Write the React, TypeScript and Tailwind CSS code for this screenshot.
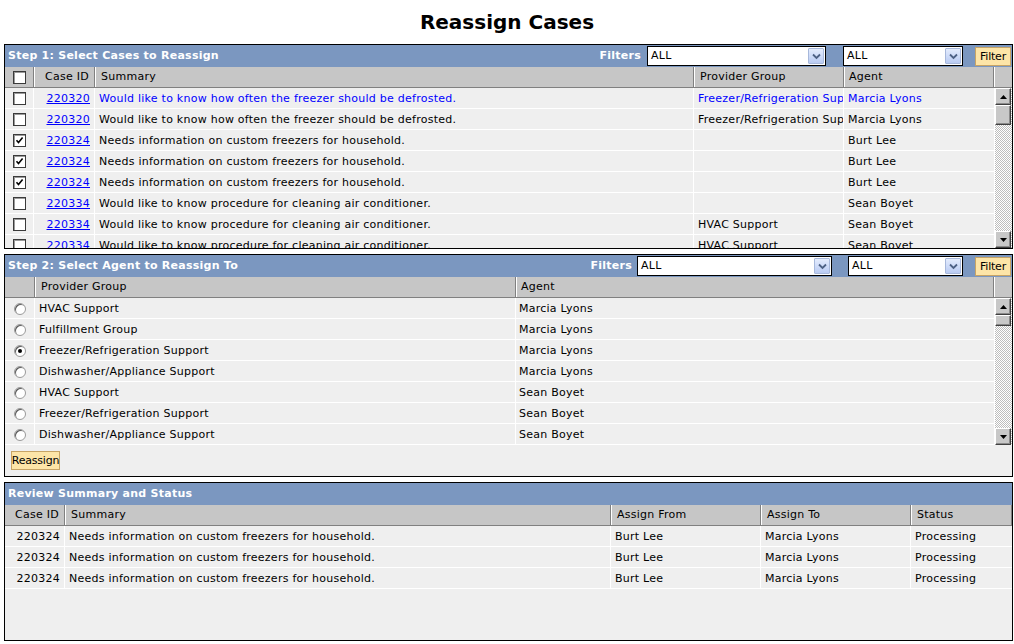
import React from "react";

type CaseRow = {
  id: string;
  summary: string;
  group: string;
  agent: string;
  checked?: boolean;
  active?: boolean;
};

const cases: CaseRow[] = [
  { id: "220320", summary: "Would like to know how often the freezer should be defrosted.", group: "Freezer/Refrigeration Support", agent: "Marcia Lyons", active: true },
  { id: "220320", summary: "Would like to know how often the freezer should be defrosted.", group: "Freezer/Refrigeration Support", agent: "Marcia Lyons" },
  { id: "220324", summary: "Needs information on custom freezers for household.", group: "", agent: "Burt Lee", checked: true },
  { id: "220324", summary: "Needs information on custom freezers for household.", group: "", agent: "Burt Lee", checked: true },
  { id: "220324", summary: "Needs information on custom freezers for household.", group: "", agent: "Burt Lee", checked: true },
  { id: "220334", summary: "Would like to know procedure for cleaning air conditioner.", group: "", agent: "Sean Boyet" },
  { id: "220334", summary: "Would like to know procedure for cleaning air conditioner.", group: "HVAC Support", agent: "Sean Boyet" },
  { id: "220334", summary: "Would like to know procedure for cleaning air conditioner.", group: "HVAC Support", agent: "Sean Boyet" },
];

const agents = [
  { group: "HVAC Support", agent: "Marcia Lyons" },
  { group: "Fulfillment Group", agent: "Marcia Lyons" },
  { group: "Freezer/Refrigeration Support", agent: "Marcia Lyons", selected: true },
  { group: "Dishwasher/Appliance Support", agent: "Marcia Lyons" },
  { group: "HVAC Support", agent: "Sean Boyet" },
  { group: "Freezer/Refrigeration Support", agent: "Sean Boyet" },
  { group: "Dishwasher/Appliance Support", agent: "Sean Boyet" },
];

const review = [
  { id: "220324", summary: "Needs information on custom freezers for household.", from: "Burt Lee", to: "Marcia Lyons", status: "Processing" },
  { id: "220324", summary: "Needs information on custom freezers for household.", from: "Burt Lee", to: "Marcia Lyons", status: "Processing" },
  { id: "220324", summary: "Needs information on custom freezers for household.", from: "Burt Lee", to: "Marcia Lyons", status: "Processing" },
];

function Checkbox({ checked }: { checked?: boolean }) {
  return (
    <span className="flex items-center justify-center w-[13px] h-[13px] bg-white border border-[#3a3a3a] shadow-[inset_1px_1px_0_#9a9a9a]">
      {checked && (
        <svg width="9" height="9" viewBox="0 0 9 9">
          <path d="M1.5 4.2 L3.5 6.5 L7.6 1.5" fill="none" stroke="#000" strokeWidth="1.6" />
        </svg>
      )}
    </span>
  );
}

function Radio({ checked }: { checked?: boolean }) {
  return (
    <span className="flex items-center justify-center w-[12px] h-[12px] rounded-full bg-white border border-[#9a9a9a] shadow-[inset_1px_1px_0_#5a5a5a]">
      {checked && <span className="w-[4px] h-[4px] rounded-full bg-black" />}
    </span>
  );
}

function SelectBox({ className }: { className: string }) {
  return (
    <div className={`flex items-center h-[20px] bg-white border border-black ${className}`}>
      <span className="flex-1 pl-[3px] pt-[1px] text-[11px] text-black">ALL</span>
      <span className="flex items-center justify-center w-[16px] h-[16px] mr-[1px] border border-[#a7b8db] rounded-[1px] bg-gradient-to-b from-[#e4ecfd] to-[#b9cbf3]">
        <svg width="9" height="7" viewBox="0 0 9 7">
          <path d="M1 1.5 L4.5 5 L8 1.5" fill="none" stroke="#4d6185" strokeWidth="1.8" />
        </svg>
      </span>
    </div>
  );
}

function YellowButton({ label, className }: { label: string; className: string }) {
  return (
    <span className={`flex items-center justify-center h-[19px] bg-[#fde5a8] border border-[#c7a466] text-[11px] tracking-[-0.2px] text-black leading-none ${className}`}>
      {label}
    </span>
  );
}

function ScrollBtn({ down }: { down?: boolean }) {
  return (
    <div className="flex items-center justify-center w-[16px] h-[17px] bg-[#c8c8c8] border-t border-l border-white border-b border-r border-b-[#404040] border-r-[#404040] shadow-[inset_-1px_-1px_0_#8a8a8a]">
      <svg width="7" height="4" viewBox="0 0 7 4">
        {down ? <path d="M0 0 H7 L3.5 4 Z" fill="#000" /> : <path d="M0 4 H7 L3.5 0 Z" fill="#000" />}
      </svg>
    </div>
  );
}

function Scrollbar({ height, thumb }: { height: string; thumb: string }) {
  return (
    <div className={`flex flex-col justify-between w-[18px] ${height} border-l border-white pr-[1px] bg-[repeating-conic-gradient(#bdbdbd_0%_25%,#ffffff_0%_50%)] bg-[length:2px_2px]`}>
      <div className="flex flex-col">
        <ScrollBtn />
        <div className={`w-[16px] ${thumb} bg-[#c8c8c8] border-t border-l border-white border-b border-r border-b-[#404040] border-r-[#404040] shadow-[inset_-1px_-1px_0_#8a8a8a]`} />
      </div>
      <ScrollBtn down />
    </div>
  );
}

function PanelHeader({ title, children }: { title: string; children?: React.ReactNode }) {
  return (
    <div className="flex items-center h-[22px] bg-[#7b97c0] pl-[3px]">
      <span className="text-[11px] font-bold text-white tracking-[0.25px]">{title}</span>
      {children}
    </div>
  );
}

function HeadCell({ className, children }: { className: string; children?: React.ReactNode }) {
  return (
    <div className={`flex items-center h-full border-l border-white border-r border-r-[#808080] overflow-hidden whitespace-nowrap ${className}`}>
      {children}
    </div>
  );
}

export default function App() {
  return (
    <div className="w-[1014px] h-[644px] bg-white font-['DejaVu_Sans',Verdana,sans-serif] text-[11px] tracking-[0.25px] text-black">
      <div className="flex items-center justify-center h-[44px]">
        <h1 className="text-[20px] font-bold leading-none tracking-normal">Reassign Cases</h1>
      </div>

      {/* Step 1 */}
      <div className="ml-[4px] w-[1009px] border border-black">
        <PanelHeader title="Step 1: Select Cases to Reassign">
          <span className="ml-auto mr-[6px] text-[11px] font-bold text-white">Filters</span>
          <SelectBox className="w-[179px]" />
          <SelectBox className="w-[120px] ml-[17px]" />
          <span className="ml-[12px] mr-[1px]">
            <YellowButton label="Filter" className="w-[36px]" />
          </span>
        </PanelHeader>
        <div className="flex h-[21px] bg-[#c6c6c6] border-b border-[#808080]">
          <HeadCell className="w-[29px] justify-center border-l-0">
            <Checkbox />
          </HeadCell>
          <HeadCell className="w-[61px] justify-end pr-[5px]">Case ID</HeadCell>
          <HeadCell className="w-[599px] pl-[5px]">Summary</HeadCell>
          <HeadCell className="w-[150px] pl-[5px]">Provider Group</HeadCell>
          <HeadCell className="w-[150px] pl-[4px]">Agent</HeadCell>
          <HeadCell className="w-[18px] border-r-0" />
        </div>
        <div className="flex h-[160px] bg-[#efefef]">
          <div className="w-[989px] h-[160px] overflow-hidden">
            {cases.map((c, i) => (
              <div key={i} className={`flex h-[21px] border-b border-white ${c.active ? "text-[#0000ff]" : ""}`}>
                <div className="flex items-center justify-center w-[29px] pt-[1px] border-r border-white">
                  <Checkbox checked={c.checked} />
                </div>
                <div className="flex items-center justify-end w-[61px] pt-[2px] pr-[4px] border-r border-white">
                  <span className="text-[#0000ff] underline">{c.id}</span>
                </div>
                <div className="flex items-center w-[599px] pt-[2px] pl-[4px] border-r border-white whitespace-nowrap overflow-hidden">{c.summary}</div>
                <div className="flex items-center w-[150px] pt-[2px] pl-[4px] border-r border-white whitespace-nowrap overflow-hidden">{c.group}</div>
                <div className="flex items-center w-[150px] pt-[2px] pl-[4px] whitespace-nowrap overflow-hidden">{c.agent}</div>
              </div>
            ))}
          </div>
          <Scrollbar height="h-[160px]" thumb="h-[20px]" />
        </div>
      </div>

      {/* Step 2 */}
      <div className="mt-[5px] ml-[4px] w-[1009px] border border-black">
        <PanelHeader title="Step 2: Select Agent to Reassign To">
          <span className="ml-auto mr-[5px] text-[11px] font-bold text-white">Filters</span>
          <SelectBox className="w-[195px]" />
          <SelectBox className="w-[115px] ml-[16px]" />
          <span className="ml-[12px] mr-[1px]">
            <YellowButton label="Filter" className="w-[36px]" />
          </span>
        </PanelHeader>
        <div className="flex h-[21px] bg-[#c6c6c6] border-b border-[#808080]">
          <HeadCell className="w-[30px] border-l-0" />
          <HeadCell className="w-[481px] pl-[5px]">Provider Group</HeadCell>
          <HeadCell className="w-[478px] pl-[4px]">Agent</HeadCell>
          <HeadCell className="w-[18px] border-r-0" />
        </div>
        <div className="flex h-[147px] bg-[#efefef]">
          <div className="w-[989px] h-[147px] overflow-hidden">
            {agents.map((a, i) => (
              <div key={i} className="flex h-[21px] border-b border-white">
                <div className="flex items-center justify-center w-[30px] pt-[1px] border-r border-white">
                  <Radio checked={a.selected} />
                </div>
                <div className="flex items-center w-[481px] pt-[2px] pl-[4px] border-r border-white whitespace-nowrap">{a.group}</div>
                <div className="flex items-center w-[478px] pt-[2px] pl-[3px] whitespace-nowrap">{a.agent}</div>
              </div>
            ))}
          </div>
          <Scrollbar height="h-[147px]" thumb="h-[11px]" />
        </div>
        <div className="flex items-center h-[31px] bg-[#efefef] pl-[6px]">
          <YellowButton label="Reassign" className="w-[49px]" />
        </div>
      </div>

      {/* Review */}
      <div className="mt-[5px] ml-[4px] w-[1009px] h-[159px] flex flex-col border border-black">
        <PanelHeader title="Review Summary and Status" />
        <div className="flex h-[21px] bg-[#c6c6c6] border-b border-[#808080]">
          <HeadCell className="w-[60px] justify-end pr-[5px] border-l-0">Case ID</HeadCell>
          <HeadCell className="w-[546px] pl-[5px]">Summary</HeadCell>
          <HeadCell className="w-[150px] pl-[5px]">Assign From</HeadCell>
          <HeadCell className="w-[150px] pl-[5px]">Assign To</HeadCell>
          <HeadCell className="w-[101px] pl-[5px]">Status</HeadCell>
        </div>
        <div className="flex-1 bg-[#efefef]">
          {review.map((r, i) => (
            <div key={i} className="flex h-[21px] border-b border-white">
              <div className="flex items-center justify-end w-[60px] pt-[2px] pr-[4px] border-r border-white">{r.id}</div>
              <div className="flex items-center w-[546px] pt-[2px] pl-[4px] border-r border-white whitespace-nowrap">{r.summary}</div>
              <div className="flex items-center w-[150px] pt-[2px] pl-[4px] border-r border-white">{r.from}</div>
              <div className="flex items-center w-[150px] pt-[2px] pl-[4px] border-r border-white">{r.to}</div>
              <div className="flex items-center w-[101px] pt-[2px] pl-[4px]">{r.status}</div>
            </div>
          ))}
        </div>
      </div>
    </div>
  );
}
